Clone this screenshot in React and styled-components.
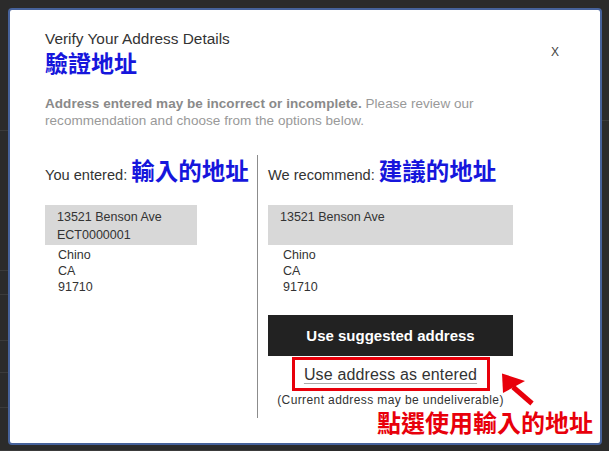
import React from "react";
import styled, { createGlobalStyle } from "styled-components";

const GlobalStyle = createGlobalStyle`
  html, body { margin: 0; padding: 0; }
  body {
    width: 609px;
    height: 451px;
    overflow: hidden;
    background: #2b2b2b;
    font-family: "Liberation Sans", Arial, sans-serif;
  }
`;

const Stage = styled.div`
  position: relative;
  width: 609px;
  height: 451px;
  overflow: hidden;
`;

const Backdrop = styled.div`
  display: grid;
  grid-template-columns: 300px 1fr;
  height: 100%;
`;

const BackdropColumn = styled.div`
  display: flex;
  flex-direction: column;
`;

const BackdropRow = styled.div`
  flex: 0 0 ${(p) => p.$h}px;
  box-sizing: border-box;
  border-bottom: 1px solid #3b3b3b;
`;

const Modal = styled.div`
  position: absolute;
  left: 8px;
  top: 8px;
  width: 594px;
  height: 437px;
  box-sizing: border-box;
  border: 2px solid #46629b;
  border-radius: 4px;
  background: #fff;
  padding: 20px 35px 0;
  display: flex;
  flex-direction: column;
`;

const Header = styled.div`
  display: flex;
  justify-content: space-between;
  align-items: flex-start;
`;

const TitleBlock = styled.div`
  display: flex;
  flex-direction: column;
`;

const Title = styled.h2`
  margin: 0;
  font-size: 15.4px;
  line-height: 18px;
  font-weight: normal;
  color: #333;
`;

const CnTitle = styled.div`
  margin-top: 1px;
  font-family: "Noto Sans CJK TC", "Noto Sans CJK SC", sans-serif;
  font-weight: 700;
  font-size: 23px;
  line-height: 26px;
  color: #1616dc;
`;

const CloseButton = styled.button`
  margin: 15px 6px 0 0;
  padding: 0;
  border: none;
  background: none;
  font-family: "Liberation Sans", Arial, sans-serif;
  font-size: 12px;
  line-height: 14px;
  color: #444;
  cursor: pointer;
`;

const Intro = styled.p`
  margin: 20px 0 0;
  max-width: 480px;
  font-size: 13.5px;
  line-height: 17px;
  letter-spacing: 0.05px;
  color: #999;

  strong {
    color: #8a8a8a;
  }
`;

const Columns = styled.div`
  margin-top: 26px;
  display: grid;
  grid-template-columns: 212px 1fr;
  height: 263px;
`;

const Column = styled.div`
  display: flex;
  flex-direction: column;
  align-items: flex-start;
  padding-top: 2px;
  ${(p) =>
    p.$divided &&
    `
    border-left: 1px solid #8c8c8c;
    padding-left: 10px;
  `}
`;

const ColumnHeading = styled.div`
  height: 32px;
  font-size: 14.6px;
  line-height: 26px;
  color: #333;
  white-space: nowrap;
`;

const CnLabel = styled.span`
  font-family: "Noto Sans CJK TC", "Noto Sans CJK SC", sans-serif;
  font-weight: 700;
  font-size: 23.5px;
  color: #1616dc;
`;

const AddressBox = styled.div`
  margin-top: 16px;
  width: ${(p) => p.$w}px;
  height: 40px;
  box-sizing: border-box;
  padding: 3px 12px 0;
  background: #d8d8d8;
  font-size: 12.5px;
  line-height: 18px;
  color: #333;
`;

const AddressLines = styled.div`
  margin-top: 2px;
  padding-left: ${(p) => p.$indent}px;
  font-size: 12.5px;
  line-height: 16px;
  color: #333;
`;

const Actions = styled.div`
  margin-top: 20px;
  width: 245px;
  display: flex;
  flex-direction: column;
  align-items: center;
`;

const PrimaryButton = styled.button`
  width: 245px;
  height: 41px;
  border: none;
  background: #222;
  color: #fff;
  font-family: "Liberation Sans", Arial, sans-serif;
  font-weight: 700;
  font-size: 15px;
  cursor: pointer;
`;

const Highlight = styled.div`
  margin-top: 1px;
  width: 198px;
  height: 34px;
  box-sizing: border-box;
  border: 3px solid #e8000b;
  display: flex;
  justify-content: center;
  padding-top: 5px;
`;

const TextLink = styled.a`
  font-size: 16px;
  line-height: 20px;
  letter-spacing: 0.15px;
  color: #333;
  text-decoration: underline;
  text-decoration-color: #aaa;
  text-underline-offset: 3px;
  white-space: nowrap;
  cursor: pointer;
`;

const Note = styled.div`
  margin-top: 2px;
  font-size: 12px;
  line-height: 14px;
  letter-spacing: 0.4px;
  color: #333;
  white-space: nowrap;
`;

const AnnotationText = styled.div`
  position: absolute;
  left: 367px;
  top: 400px;
  font-family: "Noto Sans CJK TC", "Noto Sans CJK SC", sans-serif;
  font-weight: 700;
  font-size: 24px;
  line-height: 24px;
  color: #e8000b;
  white-space: nowrap;
`;

const AnnotationArrow = styled.svg`
  position: absolute;
  left: 488px;
  top: 360px;
  width: 40px;
  height: 40px;
`;

export default function App() {
  return (
    <>
      <GlobalStyle />
      <Stage>
        <Backdrop>
          <BackdropColumn>
            {[131, 140, 24, 46, 32, 35, 43].map((h, i) => (
              <BackdropRow key={i} $h={h} />
            ))}
          </BackdropColumn>
          <BackdropColumn>
            <BackdropRow $h={121} />
          </BackdropColumn>
        </Backdrop>

        <Modal>
          <Header>
            <TitleBlock>
              <Title>Verify Your Address Details</Title>
              <CnTitle>驗證地址</CnTitle>
            </TitleBlock>
            <CloseButton>X</CloseButton>
          </Header>

          <Intro>
            <strong>Address entered may be incorrect or incomplete.</strong> Please review our
            recommendation and choose from the options below.
          </Intro>

          <Columns>
            <Column>
              <ColumnHeading>
                You entered: <CnLabel>輸入的地址</CnLabel>
              </ColumnHeading>
              <AddressBox $w={152}>
                13521 Benson Ave
                <br />
                ECT0000001
              </AddressBox>
              <AddressLines $indent={13}>
                Chino
                <br />
                CA
                <br />
                91710
              </AddressLines>
            </Column>

            <Column $divided>
              <ColumnHeading>
                We recommend: <CnLabel>建議的地址</CnLabel>
              </ColumnHeading>
              <AddressBox $w={245}>13521 Benson Ave</AddressBox>
              <AddressLines $indent={15}>
                Chino
                <br />
                CA
                <br />
                91710
              </AddressLines>
              <Actions>
                <PrimaryButton>Use suggested address</PrimaryButton>
                <Highlight>
                  <TextLink>Use address as entered</TextLink>
                </Highlight>
                <Note>(Current address may be undeliverable)</Note>
              </Actions>
            </Column>
          </Columns>

          <AnnotationArrow viewBox="0 0 40 40">
            <line x1="15" y1="17" x2="34" y2="33.5" stroke="#e8000b" strokeWidth="5" />
            <polygon points="4,3.5 5,23 27,11" fill="#e8000b" />
          </AnnotationArrow>
          <AnnotationText>點選使用輸入的地址</AnnotationText>
        </Modal>
      </Stage>
    </>
  );
}
